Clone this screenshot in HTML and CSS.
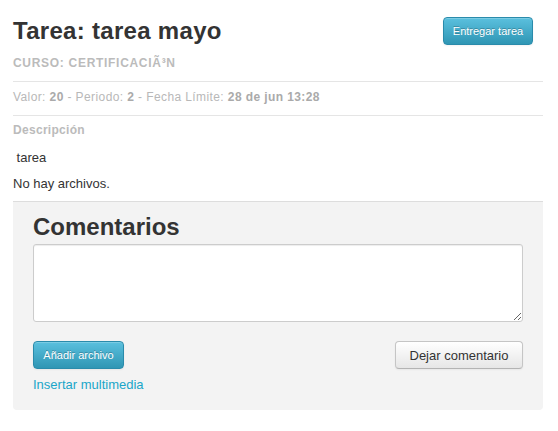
FILE: index.html
```html
<!DOCTYPE html>
<html lang="es">
<head>
<meta charset="utf-8">
<title>Tarea: tarea mayo</title>
<link rel="stylesheet" href="styles.css">
</head>
<body>
<div class="page">
  <div class="header">
    <h1 class="title">Tarea: tarea mayo</h1>
    <button class="btn btn-info">Entregar tarea</button>
  </div>
  <div class="course">CURSO: CERTIFICACIÃ³N</div>
  <div class="meta">Valor: <b>20</b> - Periodo: <b>2</b> - Fecha Límite: <b>28 de jun 13:28</b></div>
  <div class="label">Descripción</div>
  <div class="desc">&nbsp;tarea</div>
  <div class="files">No hay archivos.</div>
  <div class="comments">
    <h2 class="comments-title">Comentarios</h2>
    <textarea class="comment-input"></textarea>
    <div class="actions">
      <button class="btn btn-info">Añadir archivo</button>
      <button class="btn btn-default">Dejar comentario</button>
    </div>
    <a class="media-link" href="#">Insertar multimedia</a>
  </div>
</div>
</body>
</html>
```
FILE: styles.css
```css
html, body {
  margin: 0;
  padding: 0;
  background: #fff;
}
body {
  font-family: "Liberation Sans", Arial, sans-serif;
  color: #333;
}
.page {
  width: 530px;
  margin-left: 13px;
  padding-top: 16px;
}
.header {
  display: flex;
  justify-content: space-between;
  align-items: flex-start;
}
.title {
  margin: 0;
  font-size: 24px;
  line-height: 30px;
  font-weight: bold;
  letter-spacing: 0.3px;
  color: #333;
}
.btn {
  font-family: "Liberation Sans", Arial, sans-serif;
  height: 28px;
  border-radius: 4px;
  cursor: pointer;
  box-sizing: border-box;
  white-space: nowrap;
}
.btn-info {
  font-size: 11px;
  color: #fff;
  padding: 0;
  border: 1px solid #2a8bab;
  background: linear-gradient(to bottom, #5bc0de, #2f96b4);
  text-shadow: 0 -1px 0 rgba(0,0,0,0.25);
  box-shadow: inset 0 1px 0 rgba(255,255,255,0.2), 0 1px 2px rgba(0,0,0,0.05);
}
.header .btn-info {
  margin-top: 1px;
  margin-right: 10px;
  width: 90px;
}
.btn-default {
  font-size: 13px;
  color: #333;
  padding: 0;
  border: 1px solid #c5c5c5;
  border-bottom-color: #b3b3b3;
  background: linear-gradient(to bottom, #ffffff, #e6e6e6);
  box-shadow: inset 0 1px 0 rgba(255,255,255,0.2), 0 1px 2px rgba(0,0,0,0.05);
}
.course {
  margin-top: 9px;
  font-size: 12px;
  line-height: 16px;
  font-weight: bold;
  letter-spacing: 0.7px;
  color: #bbb;
  padding-bottom: 10px;
  border-bottom: 1px solid #e5e5e5;
}
.meta {
  font-size: 12px;
  line-height: 16px;
  letter-spacing: 0.4px;
  color: #b8b8b8;
  padding: 7px 0 10px;
  border-bottom: 1px solid #e5e5e5;
}
.meta b {
  color: #aaa;
}
.label {
  margin-top: 6px;
  font-size: 12px;
  line-height: 16px;
  font-weight: bold;
  letter-spacing: 0.3px;
  color: #bbb;
}
.desc {
  margin-top: 11px;
  font-size: 13px;
  line-height: 18px;
  color: #333;
}
.files {
  margin-top: 8px;
  font-size: 13px;
  line-height: 18px;
  color: #333;
}
.comments {
  margin-top: 8px;
  background: #f3f3f3;
  border-top: 1px solid #ddd;
  border-radius: 0 0 4px 4px;
  padding: 10px 20px 16px;
}
.comments-title {
  margin: 0;
  font-size: 24px;
  line-height: 30px;
  font-weight: bold;
  color: #333;
}
.comment-input {
  display: block;
  box-sizing: border-box;
  width: 100%;
  height: 78px;
  margin-top: 2px;
  border: 1px solid #ccc;
  border-radius: 3px;
  background: #fff;
  box-shadow: inset 0 1px 1px rgba(0,0,0,0.075);
  resize: vertical;
  font-family: "Liberation Sans", Arial, sans-serif;
  font-size: 13px;
}
.actions {
  display: flex;
  justify-content: space-between;
  margin-top: 19px;
}
.actions .btn-info {
  width: 91px;
}
.actions .btn-default {
  width: 128px;
}
.media-link {
  display: block;
  margin-top: 7px;
  font-size: 13px;
  line-height: 18px;
  color: #1aa6c9;
  text-decoration: none;
}
```
